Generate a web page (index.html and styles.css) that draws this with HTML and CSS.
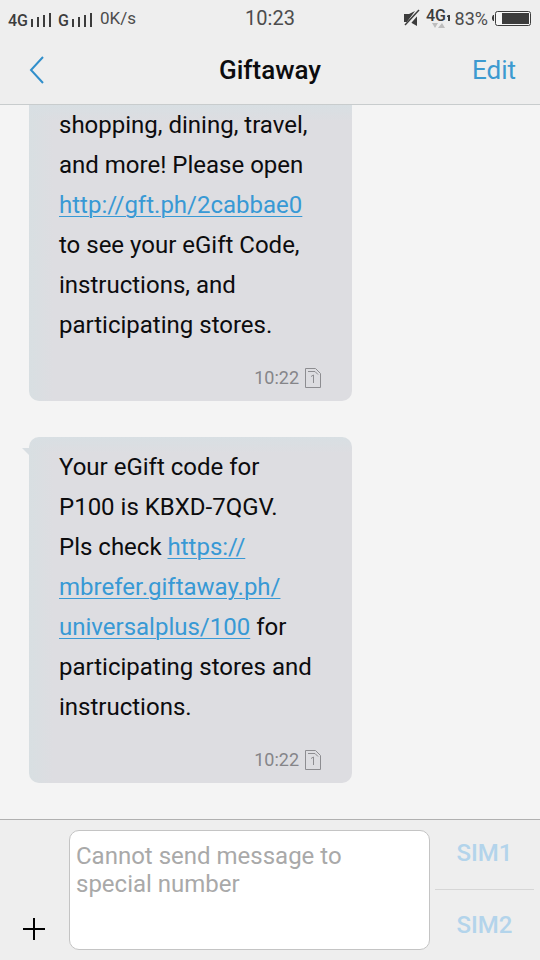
FILE: index.html
```html
<!DOCTYPE html>
<html lang="en">
<head>
<meta charset="utf-8">
<meta name="viewport" content="width=device-width, initial-scale=1">
<title>Giftaway</title>
<link rel="stylesheet" href="styles.css">
</head>
<body>
<div class="app">
  <div class="status">
    <div class="status-side">
      <span class="network">4G</span>
      <svg class="bars" width="22" height="16" viewBox="0 0 22 16" aria-hidden="true"><path d="M1 7h2v8H1zM7 5h2v10H7zM13 3h2v12h-2zM19 1h2v14h-2z"/></svg>
      <span class="network second">G</span>
      <svg class="bars" width="22" height="16" viewBox="0 0 22 16" aria-hidden="true"><path d="M1 7h2v8H1zM7 5h2v10H7zM13 3h2v12h-2zM19 1h2v14h-2z"/></svg>
      <span class="speed">0K/s</span>
    </div>
    <span class="clock">10:23</span>
    <div class="status-side end">
      <svg width="18" height="18" viewBox="0 0 18 18" aria-hidden="true"><path fill="#3c3c3c" d="M1 5h5l6-3L4 13H1zM14 4v13l-7-4z"/><path stroke="#eee" stroke-width="4" d="M3 17 16 2"/><path stroke="#3c3c3c" stroke-width="1.500" d="M2 16 16 1"/></svg>
      <svg class="data" width="26" height="30" viewBox="0 -4 26 30" aria-hidden="true"><text class="data-label" x="0" y="14">4G</text><path fill="#3c3c3c" d="M22 8h2v6h-2V10h-1V9z"/><path fill="#bdbdbd" d="M6 16h6l-3 5zM12 21h7l-3-5z"/></svg>
      <span class="percent">83%</span>
      <svg class="battery" width="40" height="17" viewBox="0 0 40 17" aria-hidden="true"><path fill="#3c3c3c" d="M2 5v6H1L0 9V7l1-2z"/><rect x="3.500" y="1.500" width="35" height="14" rx="2" fill="#f6f6f6" stroke="#3c3c3c"/><path fill="#3c3c3c" d="M10 3h27v11H10z"/></svg>
    </div>
  </div>
  <header class="header">
    <button class="back" type="button" aria-label="Back"><svg width="16" height="28" viewBox="0 0 16 28" aria-hidden="true"><path fill="none" stroke="#318fcb" stroke-width="2" d="M14 1 2 14l12 13"/></svg></button>
    <h1 class="title">Giftaway</h1>
    <button class="edit" type="button">Edit</button>
  </header>
  <main class="thread">
    <article class="bubble continued">
      <p class="text">shopping, dining, travel,<br>and more! Please open<br><a href="http://gft.ph/2cabbae0">http://gft.ph/2cabbae0</a><br>to see your eGift Code,<br>instructions, and<br>participating stores.</p>
      <div class="meta"><time>10:22</time><svg width="16" height="20" viewBox="0 0 16 20" aria-hidden="true"><path fill="none" stroke="#8d8d91" d="M.5.5h10l5 5v14H.5zM3 3.500h7l3 3M6 8.500l2.500-1.500v8"/></svg></div>
    </article>
    <article class="bubble">
      <svg class="tail" width="8" height="8" viewBox="0 0 8 8" aria-hidden="true"><path fill="#d8dee2" d="M0 0h8v8L6 6z"/></svg>
      <p class="text">Your eGift code for<br>P100 is KBXD-7QGV.<br>Pls check <a href="https://mbrefer.giftaway.ph/universalplus/100">https://<br>mbrefer.giftaway.ph/<br>universalplus/100</a> for<br>participating stores and<br>instructions.</p>
      <div class="meta"><time>10:22</time><svg width="16" height="20" viewBox="0 0 16 20" aria-hidden="true"><path fill="none" stroke="#8d8d91" d="M.5.5h10l5 5v14H.5zM3 3.500h7l3 3M6 8.500l2.500-1.500v8"/></svg></div>
    </article>
  </main>
  <footer class="composer">
    <button class="add" type="button" aria-label="Add attachment"><svg width="22" height="22" viewBox="0 0 22 22" aria-hidden="true"><path stroke="#000" stroke-width="2" d="M11 0v22M0 11h22"/></svg></button>
    <textarea class="input" aria-label="Message" placeholder="Cannot send message to special number"></textarea>
    <div class="sims">
      <button class="sim" type="button" disabled>SIM1</button>
      <button class="sim" type="button" disabled>SIM2</button>
    </div>
  </footer>
</div>
</body>
</html>
```
FILE: styles.css
```css
* { box-sizing: border-box; }
body {
  margin: 0;
  font-family: Roboto, "Liberation Sans", sans-serif;
  background: #f4f4f4;
  color: #0c0c0e;
}
button {
  border: 0;
  padding: 0;
  background: none;
  font: inherit;
}
svg { display: block; flex: none; }
.app {
  display: flex;
  flex-direction: column;
  min-height: 100vh;
}
.status {
  display: grid;
  grid-template-columns: 1fr auto 1fr;
  align-items: center;
  height: 36px;
  padding: 0 8px;
  background: #eee;
  color: #4c4c4c;
  font-size: 18px;
}
.status-side { display: flex; align-items: center; }
.end { justify-content: flex-end; }
.network {
  margin-top: 4px;
  font-size: 16px;
  font-weight: 500;
  color: #3c3c3c;
}
.second { margin-left: 6px; }
.bars { margin: 4px 0 0 2px; fill: #3c3c3c; }
.speed { margin-left: 7px; font-size: 17px; }
.clock { font-size: 20px; }
.data { margin-left: 5px; }
.data-label { font-size: 16px; font-weight: 500; fill: #3c3c3c; }
.percent { margin-left: 3px; }
.battery { margin-left: 4px; }
.header {
  display: grid;
  grid-template-columns: 1fr auto 1fr;
  align-items: center;
  height: 69px;
  padding: 0 24px;
  background: #eee;
  border-bottom: 1px solid #c8cccd;
}
.back { justify-self: start; padding: 0 5px; }
.title { margin: 0; font-size: 26px; font-weight: 500; line-height: 32px; }
.edit { justify-self: end; color: #3c9ad0; font-size: 26px; }
.thread {
  flex: 1;
  display: flex;
  flex-direction: column;
  align-items: flex-start;
  gap: 36px;
  padding: 0 29px 36px;
}
.bubble {
  position: relative;
  width: 67%;
  min-width: 323px;
  padding: 10px 30px 12px;
  border-radius: 10px;
  background:
    linear-gradient(180deg, #d8dfe3, #d8dfe300 16px),
    linear-gradient(90deg, #d8dfe2, #dddde1 24px);
}
.continued { padding-top: 0; border-radius: 0 0 10px 10px; }
.tail { position: absolute; top: 11px; left: -7px; }
.text { margin: 0; font-size: 24px; line-height: 40px; white-space: nowrap; }
.text a { color: #3899d5; text-decoration-thickness: 1px; text-underline-offset: 3px; }
.meta {
  display: flex;
  justify-content: flex-end;
  align-items: center;
  gap: 6px;
  padding: 22px 1px 0 0;
  color: #858589;
  font-size: 18px;
  line-height: 22px;
}
.composer {
  display: flex;
  padding: 10px 6px;
  background: #eee;
  border-top: 1px solid #b0b0b0;
}
.add { align-self: flex-end; padding: 10px 24px 10px 17px; }
.input {
  flex: 1;
  min-width: 0;
  height: 120px;
  padding: 11px 6px;
  border: 1px solid #c4c4c4;
  border-radius: 10px;
  background: #fff;
  font: 24px/28px Roboto, "Liberation Sans", sans-serif;
  resize: none;
}
.input::placeholder { color: #a9a9a9; opacity: 1; }
.sims {
  display: flex;
  flex-direction: column;
  width: 99px;
  margin: -12px 0 -10px 5px;
}
.sim { flex: 1; color: #b3d4eb; font-size: 24px; font-weight: 500; }
.sim + .sim { border-top: 1px solid #d6d6d6; }
```
